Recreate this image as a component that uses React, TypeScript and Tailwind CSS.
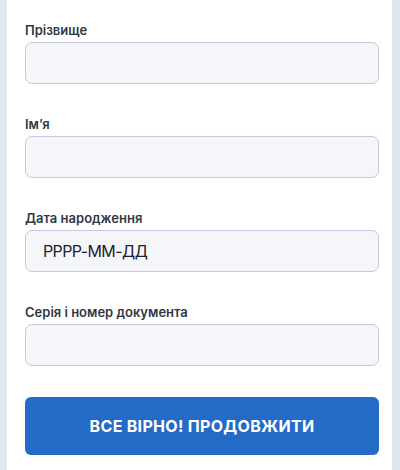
export default function App() {
  const fields = [
    { label: "Прізвище", value: "" },
    { label: "Ім’я", value: "" },
    { label: "Дата народження", value: "РРРР-ММ-ДД" },
    { label: "Серія і номер документа", value: "" },
  ]

  return (
    <div
      className="flex h-[470px] w-[400px] overflow-hidden bg-[#e1e7f0] pl-[7px] pr-[8px]"
      style={{ fontFamily: "Inter, 'Noto Sans', sans-serif" }}
    >
      <div className="flex flex-1 flex-col bg-white pl-[18px] pr-[13px] pt-[21px]">
        {fields.map((f) => (
          <div key={f.label} className="mb-[31px] flex flex-col">
            <label className="mb-[3px] text-[13px] font-semibold leading-[18px] text-[#323744]">{f.label}</label>
            <input
              readOnly
              value={f.value}
              className="h-[42px] w-full rounded-[7px] border border-[#c9c7dd] bg-[#f5f6f9] px-[17px] text-[16px] tracking-[-0.6px] text-[#1d2230] outline-none"
            />
          </div>
        ))}
        <button className="h-[58px] w-full rounded-[6px] bg-[#236bc7] text-[16px] font-bold tracking-[0.3px] text-white">
          ВСЕ ВІРНО! ПРОДОВЖИТИ
        </button>
      </div>
    </div>
  )
}
